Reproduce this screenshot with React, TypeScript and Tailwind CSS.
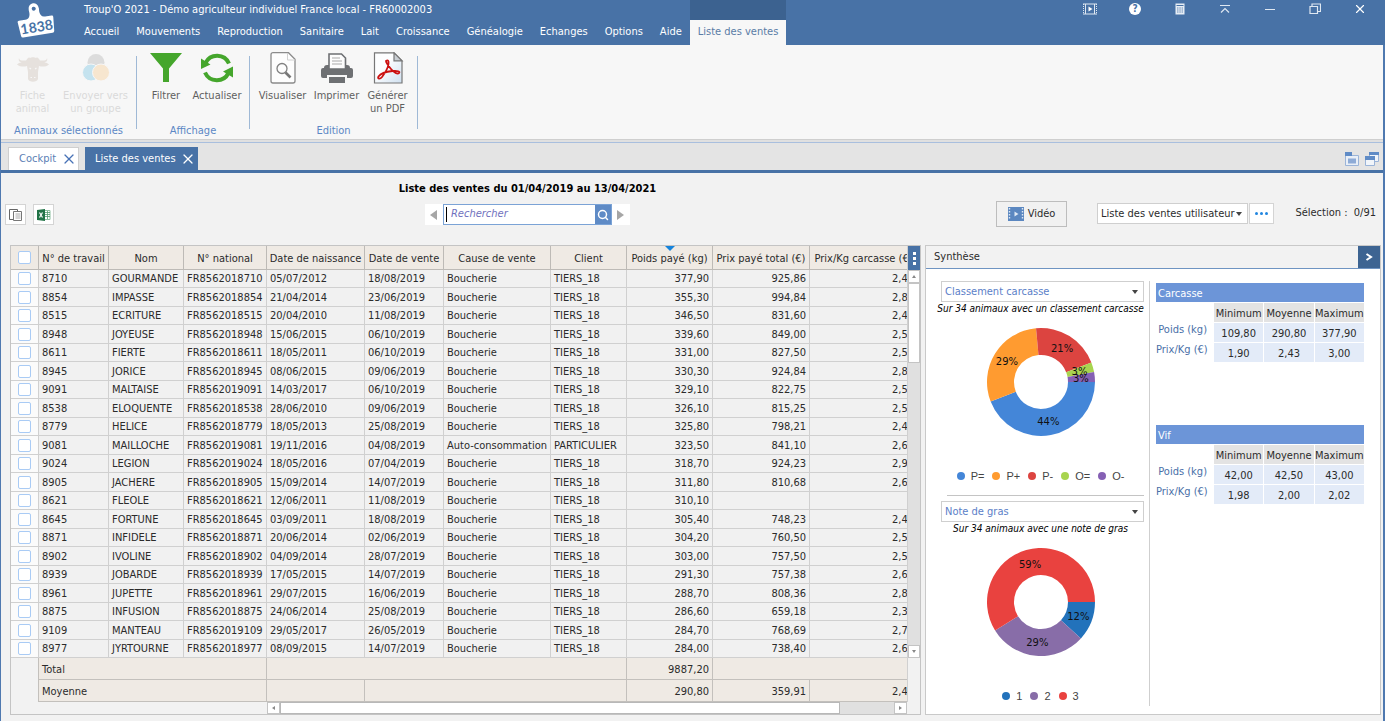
import React from "react";
import { Search, X } from "lucide-react";

const MENU = [
  "Accueil",
  "Mouvements",
  "Reproduction",
  "Sanitaire",
  "Lait",
  "Croissance",
  "Généalogie",
  "Echanges",
  "Options",
  "Aide",
];

// travail, nom, national, naissance, vente, cause, client, poids, prix total, prix/kg
const ROWS = [
  ["8710", "GOURMANDE", "FR8562018710", "05/07/2012", "18/08/2019", "Boucherie", "TIERS_18", "377,90", "925,86", "2,45"],
  ["8854", "IMPASSE", "FR8562018854", "21/04/2014", "23/06/2019", "Boucherie", "TIERS_18", "355,30", "994,84", "2,80"],
  ["8515", "ECRITURE", "FR8562018515", "20/04/2010", "11/08/2019", "Boucherie", "TIERS_18", "346,50", "831,60", "2,40"],
  ["8948", "JOYEUSE", "FR8562018948", "15/06/2015", "06/10/2019", "Boucherie", "TIERS_18", "339,60", "849,00", "2,50"],
  ["8611", "FIERTE", "FR8562018611", "18/05/2011", "06/10/2019", "Boucherie", "TIERS_18", "331,00", "827,50", "2,50"],
  ["8945", "JORICE", "FR8562018945", "08/06/2015", "09/06/2019", "Boucherie", "TIERS_18", "330,30", "924,84", "2,80"],
  ["9091", "MALTAISE", "FR8562019091", "14/03/2017", "06/10/2019", "Boucherie", "TIERS_18", "329,10", "822,75", "2,50"],
  ["8538", "ELOQUENTE", "FR8562018538", "28/06/2010", "09/06/2019", "Boucherie", "TIERS_18", "326,10", "815,25", "2,50"],
  ["8779", "HELICE", "FR8562018779", "18/05/2013", "25/08/2019", "Boucherie", "TIERS_18", "325,80", "798,21", "2,45"],
  ["9081", "MAILLOCHE", "FR8562019081", "19/11/2016", "04/08/2019", "Auto-consommation", "PARTICULIER", "323,50", "841,10", "2,60"],
  ["9024", "LEGION", "FR8562019024", "18/05/2016", "07/04/2019", "Boucherie", "TIERS_18", "318,70", "924,23", "2,90"],
  ["8905", "JACHERE", "FR8562018905", "15/09/2014", "14/07/2019", "Boucherie", "TIERS_18", "311,80", "810,68", "2,60"],
  ["8621", "FLEOLE", "FR8562018621", "12/06/2011", "11/08/2019", "Boucherie", "TIERS_18", "310,10", "", ""],
  ["8645", "FORTUNE", "FR8562018645", "03/09/2011", "18/08/2019", "Boucherie", "TIERS_18", "305,40", "748,23", "2,45"],
  ["8871", "INFIDELE", "FR8562018871", "20/06/2014", "02/06/2019", "Boucherie", "TIERS_18", "304,20", "760,50", "2,50"],
  ["8902", "IVOLINE", "FR8562018902", "04/09/2014", "28/07/2019", "Boucherie", "TIERS_18", "303,00", "757,50", "2,50"],
  ["8939", "JOBARDE", "FR8562018939", "17/05/2015", "14/07/2019", "Boucherie", "TIERS_18", "291,30", "757,38", "2,60"],
  ["8961", "JUPETTE", "FR8562018961", "29/07/2015", "16/06/2019", "Boucherie", "TIERS_18", "288,70", "808,36", "2,80"],
  ["8875", "INFUSION", "FR8562018875", "24/06/2014", "25/08/2019", "Boucherie", "TIERS_18", "286,60", "659,18", "2,30"],
  ["9109", "MANTEAU", "FR8562019109", "29/05/2017", "26/05/2019", "Boucherie", "TIERS_18", "284,70", "768,69", "2,70"],
  ["8977", "JYRTOURNE", "FR8562018977", "08/09/2015", "14/07/2019", "Boucherie", "TIERS_18", "284,00", "738,40", "2,60"],
];

const HEADERS = [
  "N° de travail",
  "Nom",
  "N° national",
  "Date de naissance",
  "Date de vente",
  "Cause de vente",
  "Client",
  "Poids payé (kg)",
  "Prix payé total (€)",
  "Prix/Kg carcasse (€)",
];

type Slice = { label: string; value: number; color: string };

const CLASSEMENT: Slice[] = [
  { label: "P=", value: 15, color: "#4486d8" },
  { label: "P+", value: 10, color: "#ff9b30" },
  { label: "P-", value: 7, color: "#dc4440" },
  { label: "O=", value: 1, color: "#a8d44f" },
  { label: "O-", value: 1, color: "#8560b4" },
];

const GRAS: Slice[] = [
  { label: "1", value: 4, color: "#2272bb" },
  { label: "2", value: 10, color: "#886da8" },
  { label: "3", value: 20, color: "#e9423f" },
];

function Logo() {
  return (
    <svg viewBox="0 0 40 36" className="h-9 w-10" aria-label="1838">
      <g transform="rotate(-9 20 20)">
        <path
          fill="#fff"
          fillRule="evenodd"
          d="M3.500 15H10c3.500 0 4.500-2 5-5 .2-2.500-.5-3 0-5a5 5 0 0 1 10 0c.5 2-.2 2.500 0 5 .5 3 1.500 5 5 5h6.500a1.500 1.500 0 0 1 1.500 1.700l-1.200 13.800a2 2 0 0 1-2 1.800H5.200a2 2 0 0 1-2-1.800L2 16.700A1.500 1.500 0 0 1 3.500 15zM20 3.500a2 2 0 1 0 0 4 2 2 0 0 0 0-4z"
        />
        <text x="20" y="29" textAnchor="middle" fontSize="14" fontWeight="700" fill="#4872a6" fontFamily="Lato">
          1838
        </text>
      </g>
    </svg>
  );
}

function CowIcon() {
  return (
    <svg viewBox="0 0 32 32" className="size-8" fill="#e6e1dd">
      <path d="M2 6c-1 3 1 4.500 4 4.500h2C5 10 2 10.500 0 12.500c3 2.500 7 2.500 10 1.500l1 6v7c1 3.500 9 3.500 10 0v-7l1-6c3 1 7 1 10-1.500-2-2-5-2.500-8-2h2c3 0 5-1.500 4-4.500 0 2-2 2.500-4 2.500h-3c-2-3-2.500-3.500-4-2.500-1-1-5-1-6 0-1.500-1-2 0-4 2.500H6C4 8.500 2 8 2 6z" />
      <path d="M13.500 25.500h1.500M17 25.500h1.500M12.500 16l1.500 1M19.500 16l-1.500 1" stroke="#f7f7f7" strokeWidth="1.200" />
    </svg>
  );
}

function GroupIcon() {
  return (
    <svg viewBox="0 0 32 32" className="size-8">
      <circle cx="16" cy="10.500" r="8.500" fill="#dcdcdc" />
      <circle cx="11" cy="20.500" r="8.500" fill="#c5e3ef" stroke="#f7f7f7" />
      <circle cx="21" cy="20.500" r="8.500" fill="#f7e6cf" stroke="#f7f7f7" />
    </svg>
  );
}

function FunnelIcon() {
  return (
    <svg viewBox="0 0 32 32" className="size-8" fill="#45a62c">
      <path d="M0 1h32L19 16.500V30h-6V16.500z" />
    </svg>
  );
}

function RefreshIcon() {
  return (
    <svg viewBox="0 0 32 32" className="size-8">
      <path d="M4.500 11A13 13 0 0 1 28 11.500M27.500 21A13 13 0 0 1 4 20.500" fill="none" stroke="#45a62c" strokeWidth="4" />
      <path d="M0 6.500v10.500l9.500-4.500zM32 25.500V14.500l-10 5z" fill="#45a62c" />
    </svg>
  );
}

function PreviewIcon() {
  return (
    <svg viewBox="0 0 32 32" className="size-8" fill="none">
      <path d="M6 .7h15.500l6.500 6.500V29a2 2 0 0 1-2 2H6a2 2 0 0 1-2-2V2.700a2 2 0 0 1 2-2z" fill="#fdfdfd" stroke="#8b8b8b" strokeWidth="1.300" />
      <path d="M20.500 1v7H28" stroke="#d0d0d0" />
      <circle cx="15" cy="16.500" r="5" stroke="#808080" strokeWidth="1.300" />
      <path d="M18.500 20.500l5 5" stroke="#777" strokeWidth="2.600" />
    </svg>
  );
}

function PrinterIcon() {
  return (
    <svg viewBox="0 0 32 32" className="size-8">
      <path d="M0 18a2 2 0 0 1 2-2h1a3 3 0 0 1 3-3h20a3 3 0 0 1 3 3h1a2 2 0 0 1 2 2v6a2 2 0 0 1-2 2h-4v-3H6v3H2a2 2 0 0 1-2-2z" fill="#6e7073" />
      <path d="M8 17V2h12.500l4 4v11z" fill="#fdfdfd" stroke="#6e7073" strokeWidth="1.600" />
      <path d="M11 6h8M11 9h10M11 12h10" stroke="#aaa" strokeWidth="1.200" />
      <path d="M8 25h16v6H8z" fill="#6e7073" />
    </svg>
  );
}

function PdfIcon() {
  return (
    <svg viewBox="0 0 32 32" className="size-8">
      <defs>
        <linearGradient id="pdf-page" x1="0" y1="0" x2="1" y2="1">
          <stop offset="0.400" stopColor="#fdfeff" />
          <stop offset="1" stopColor="#cfe0f0" />
        </linearGradient>
      </defs>
      <path d="M2.500 .8H22l8 8V31H2.500z" fill="url(#pdf-page)" stroke="#777" strokeWidth="1.200" />
      <path d="M22 .8v8h8z" fill="#c9ced3" stroke="#777" strokeWidth="1.200" />
      <path
        d="M14 9c2-1.500 3 0 2.500 3-.5 4-3.500 9-6.500 13-2 2.500-5 2-3.500-.5 2-3 8-5 14-5.500 5-.5 8 .5 6.500 2-1.500 1.500-5-.5-8-4-2.500-3-5-6-5-8z"
        fill="none"
        stroke="#cc1111"
        strokeWidth="1.800"
      />
    </svg>
  );
}

function FilmIcon({ className, frame, arrow }: { className: string; frame: string; arrow: string }) {
  return (
    <svg viewBox="0 0 16 14" className={className}>
      <rect width="16" height="14" fill={frame} />
      <path d="M1.500 1v12M14.500 1v12" stroke={arrow} strokeWidth="1.400" strokeDasharray="1.500 1.500" />
      <path d="M6.500 4.500v5l4-2.500z" fill={arrow} />
    </svg>
  );
}

function RibbonButton({
  icon,
  label,
  width,
  disabled,
}: {
  icon: React.ReactNode;
  label: string;
  width: string;
  disabled?: boolean;
}) {
  return (
    <button
      disabled={disabled}
      className={`flex h-[72px] flex-col items-center gap-[5px] whitespace-pre leading-[13px] ${width} ${disabled ? "text-[#dadada]" : "text-[#5f5f5f]"}`}
    >
      {icon}
      <span>{label}</span>
    </button>
  );
}

function RibbonGroup({ title, children, className }: { title: string; children: React.ReactNode; className: string }) {
  return (
    <div className={`flex flex-col ${className}`}>
      <div className="flex justify-center">{children}</div>
      <div className="text-center leading-[14px] text-[#5b87c5]">{title}</div>
    </div>
  );
}

function RibbonDivider() {
  return <div className="mt-1 h-[73px] w-px bg-[#9fb9d6]" />;
}

function Ribbon() {
  return (
    <div className="flex h-[94px] bg-[#f7f7f7] pt-[7px]">
      <RibbonGroup title="Animaux sélectionnés" className="w-[135px]">
        <RibbonButton icon={<CowIcon />} label={"Fiche\nanimal"} width="w-[54px]" disabled />
        <RibbonButton icon={<GroupIcon />} label={"Envoyer vers\nun groupe"} width="w-[72px]" disabled />
      </RibbonGroup>
      <RibbonDivider />
      <RibbonGroup title="Affichage" className="w-[112px]">
        <RibbonButton icon={<FunnelIcon />} label="Filtrer" width="w-[48px]" />
        <RibbonButton icon={<RefreshIcon />} label="Actualiser" width="w-[54px]" />
      </RibbonGroup>
      <RibbonDivider />
      <RibbonGroup title="Edition" className="w-[167px]">
        <RibbonButton icon={<PreviewIcon />} label="Visualiser" width="w-[54px]" />
        <RibbonButton icon={<PrinterIcon />} label="Imprimer" width="w-[54px]" />
        <RibbonButton icon={<PdfIcon />} label={"Générer\nun PDF"} width="w-[48px]" />
      </RibbonGroup>
      <RibbonDivider />
    </div>
  );
}

function TitleBar() {
  return (
    <header className="flex h-[45px] bg-[#4872a6] text-white">
      <div className="w-[84px] pt-[3px] pl-4">
        <Logo />
      </div>
      <div className="flex flex-col">
        <div className="h-5 leading-5">Troup'O 2021 - Démo agriculteur individuel France local - FR60002003</div>
        <nav className="flex h-[25px] gap-[17px] leading-6">
          {MENU.map((item) => (
            <a key={item} href="#" className="whitespace-nowrap">
              {item}
            </a>
          ))}
        </nav>
      </div>
      <div className="ml-2 flex flex-col">
        <div className="h-5 bg-[#3c6290]" />
        <a href="#" className="h-[25px] bg-[#f7f7f7] px-2 leading-6 whitespace-nowrap text-[#5a7ca6]">
          Liste des ventes
        </a>
      </div>
      <div className="ml-auto flex h-[17px] items-center gap-[31px] pr-[18px]">
        <button aria-label="Vidéo">
          <svg viewBox="0 0 14 12" className="h-3 w-3.5" fill="none" stroke="#dfe8f2">
            <path d="M0 1h14M0 11h14M2.500 1v10M11.500 1v10" />
            <path d="M.5 1v10M13.500 1v10" strokeDasharray="1 1" />
            <path d="M5.500 3.500v5l4-2.500z" fill="#fff" stroke="none" />
          </svg>
        </button>
        <button aria-label="Aide" className="mx-px size-3 rounded-full bg-white text-[10px] leading-3 font-bold text-[#4872a6]">
          ?
        </button>
        <button aria-label="Calculatrice" className="mx-px">
          <svg viewBox="0 0 12 12" className="size-3">
            <rect x="1.500" y=".5" width="9" height="11" fill="#e6edf5" />
            <path d="M2.500 2.500h7" stroke="#4872a6" />
            <path d="M3 5h6M3 7h6M3 9h6" stroke="#4872a6" strokeDasharray="1.500 .8" strokeWidth=".8" />
          </svg>
        </button>
        <button aria-label="Réduire le ruban" className="mx-px">
          <svg viewBox="0 0 12 12" className="size-3" fill="none" stroke="#dfe8f2" strokeWidth="1.200">
            <path d="M1 2.500h10M2 9.500l4-4 4 4" />
          </svg>
        </button>
        <button aria-label="Minimiser" className="mx-px">
          <svg viewBox="0 0 12 12" className="size-3" stroke="#dfe8f2">
            <path d="M1 6.500h10" />
          </svg>
        </button>
        <button aria-label="Restaurer" className="mx-px">
          <svg viewBox="0 0 12 12" className="size-3" fill="none" stroke="#dfe8f2" strokeWidth="1.200">
            <path d="M1 3.500h7.500v7H1zM3 3V1h8.500v7.500H9" />
          </svg>
        </button>
        <button aria-label="Fermer">
          <X className="size-3.5" strokeWidth={2} />
        </button>
      </div>
    </header>
  );
}

function TabBar() {
  return (
    <div className="flex h-[27px] items-end gap-1.5 bg-[#e4e4e4] pl-[7px]">
      <div className="flex h-[23px] items-center gap-[5px] border border-b-0 border-[#cfcfcf] bg-white pr-px pl-2.5 text-[#5b80b5]">
        <a href="#">Cockpit</a>
        <button aria-label="Fermer Cockpit" className="text-[#4872b6]">
          <X className="size-4" strokeWidth={1.8} />
        </button>
      </div>
      <div className="flex h-[23px] items-center gap-1 bg-[#4872a6] pt-px pr-0.5 pl-2.5 text-white">
        <a href="#">Liste des ventes</a>
        <button aria-label="Fermer Liste des ventes">
          <X className="size-4" strokeWidth={1.8} />
        </button>
      </div>
      <div className="mr-1 mb-1 ml-auto flex gap-1.5">
        <button aria-label="Onglets">
          <svg viewBox="0 0 14 14" className="size-3.5">
            <path d="M.5 3.500h13v10H.5z" fill="#e9eff7" stroke="#9bb4d8" />
            <path d="M0 0h7v4H0z" fill="#5f8bc6" />
            <path d="M3 6.500h8v5H3z" fill="#8eabd6" />
          </svg>
        </button>
        <button aria-label="Fenêtres">
          <svg viewBox="0 0 14 14" className="size-3.5">
            <path d="M4.500 .5h9v9h-9z" fill="#f1f5fa" stroke="#9bb4d8" />
            <path d="M4 0h10v3H4z" fill="#5f8bc6" />
            <path d="M.5 4.500h9v9h-9z" fill="#f1f5fa" stroke="#9bb4d8" />
            <path d="M0 4h10v4H0z" fill="#5f8bc6" />
          </svg>
        </button>
      </div>
    </div>
  );
}

function Caret({ className }: { className: string }) {
  return (
    <svg viewBox="0 0 6 4" className={`h-1 w-1.5 ${className}`} fill="#444">
      <path d="M0 0h6L3 4z" />
    </svg>
  );
}

function DropDown({ label, value, className }: { label: string; value: string; className: string }) {
  return (
    <div className={`relative flex h-[21px] ${className}`}>
      <select aria-label={label} className="w-full appearance-none border border-[#cfcfcf] bg-white pt-0.5 pl-[3px] outline-none">
        <option>{value}</option>
      </select>
      <Caret className="pointer-events-none absolute top-[9px] right-1.5" />
    </div>
  );
}

function Toolbar() {
  return (
    <div className="flex h-[72px] items-end px-[4px] pb-5">
      <div className="flex gap-[7px]">
        <button aria-label="Copier" className="flex size-[21px] items-center justify-center border border-[#d4d4d4] bg-white">
          <svg viewBox="0 0 14 12" className="h-3 w-3.5" fill="#fff" stroke="#666">
            <path d="M.5 .5h8v10h-8z" />
            <path d="M4.500 2.500h8v9h-8z" stroke="#777" />
            <path d="M6.500 5h5M6.500 7h5M6.500 9h5" stroke="#aaa" />
          </svg>
        </button>
        <button aria-label="Exporter vers Excel" className="flex size-[21px] items-center justify-center border border-[#d4d4d4] bg-white">
          <svg viewBox="0 0 14 12" className="h-3 w-3.5">
            <path d="M7.500 1.500h5.500v9H7.500z" fill="#fff" stroke="#8bbf9f" />
            <path d="M8 3.500h5M8 5.500h5M8 7.500h5M10.500 2v8" stroke="#4f9a6c" strokeWidth=".8" />
            <path d="M0 1l8-1v12l-8-1z" fill="#217346" />
            <path d="M2.500 3.500l3 5M5.500 3.500l-3 5" stroke="#fff" strokeWidth="1.200" />
          </svg>
        </button>
      </div>
      <div className="mx-auto flex flex-col items-center pl-[5px]">
        <h1 className="mb-[7px] leading-4 font-bold text-black">Liste des ventes du 01/04/2019 au 13/04/2021</h1>
        <div className="flex h-[21px] bg-white">
          <button aria-label="Précédent" className="flex w-[18px] items-center justify-center">
            <svg viewBox="0 0 7 10" className="h-2.5 w-[7px]" fill="#a6a6a6">
              <path d="M7 0v10L0 5z" />
            </svg>
          </button>
          <div className="flex w-[169px] border border-[#7ba3d6]">
            <input
              aria-label="Rechercher"
              placeholder="Rechercher"
              className="my-0.5 ml-0.5 w-0 flex-1 border-l border-black pl-1 italic outline-none placeholder:text-[#6f70bd]"
            />
            <button aria-label="Lancer la recherche" className="flex w-4 items-center justify-center bg-[#5f8bc6] text-white">
              <Search className="size-3" strokeWidth={3} />
            </button>
          </div>
          <button aria-label="Suivant" className="flex w-[18px] items-center justify-center">
            <svg viewBox="0 0 7 10" className="h-2.5 w-[7px]" fill="#a6a6a6">
              <path d="M0 0v10l7-5z" />
            </svg>
          </button>
        </div>
      </div>
      <div className="flex items-center">
        <button className="-mb-0.5 flex h-[26px] w-[71px] items-center justify-center gap-1 border border-[#bdbdbd] bg-[#f1f1f1]">
          <FilmIcon className="h-3.5 w-4" frame="#5b87c0" arrow="#dfe9f5" />
          Vidéo
        </button>
        <DropDown label="Liste" value="Liste des ventes utilisateur" className="ml-[30px] w-[151px]" />
        <button aria-label="Plus d'options" className="ml-px flex h-[21px] w-[25px] items-center justify-center gap-0.5 border border-[#d4d4d4] bg-white">
          <span className="size-[3px] rounded-full bg-[#2186e0]" />
          <span className="size-[3px] rounded-full bg-[#2186e0]" />
          <span className="size-[3px] rounded-full bg-[#2186e0]" />
        </button>
        <span className="w-[105px] pt-px pr-[3px] text-right whitespace-pre">Sélection :  0/91</span>
      </div>
    </div>
  );
}

function Tick({ label }: { label: string }) {
  return (
    <input
      type="checkbox"
      aria-label={label}
      className="mx-auto block size-[13px] appearance-none rounded-[2px] border border-[#a9cbf5] bg-white"
    />
  );
}

function SalesGrid() {
  const foot = "border-r border-b border-[#c3c0bc] bg-[#efeae4] px-[3px] pt-[3px] pb-0 leading-4";
  return (
    <section className="flex min-w-0 flex-1 flex-col border border-[#c4c4c4]">
      <div className="flex">
        <div className="w-0 flex-1 overflow-hidden">
          <table className="w-[907px] table-fixed border-separate border-spacing-0 whitespace-nowrap">
            <colgroup>
              <col className="w-[28px]" />
              <col className="w-[70px]" />
              <col className="w-[75px]" />
              <col className="w-[83px]" />
              <col className="w-[98px]" />
              <col className="w-[79px]" />
              <col className="w-[107px]" />
              <col className="w-[76px]" />
              <col className="w-[86px]" />
              <col className="w-[97px]" />
              <col className="w-[108px]" />
            </colgroup>
            <thead>
              <tr className="h-6">
                <th className="border-r border-b border-[#bdbab6] bg-[#efeae4] p-0">
                  <Tick label="Tout sélectionner" />
                </th>
                {HEADERS.map((h) => (
                  <th
                    key={h}
                    className="relative border-r border-b border-[#bdbab6] bg-[#efeae4] p-0 pt-[3px] text-center leading-4 font-normal"
                  >
                    {h === "Poids payé (kg)" && (
                      <svg viewBox="0 0 10 5" className="absolute top-0 left-[38px] h-[5px] w-2.5" fill="#1583dc">
                        <path d="M0 0h10L5 5z" />
                      </svg>
                    )}
                    {h}
                  </th>
                ))}
              </tr>
            </thead>
            <tbody>
              {ROWS.map((row) => (
                <tr key={row[0]} className="odd:h-[18px] even:h-[19px]">
                  <td className="border-r border-b border-[#d0d0d0] bg-[#fbfbfb] p-0">
                    <Tick label={`Sélectionner ${row[1]}`} />
                  </td>
                  {row.map((cell, i) => (
                    <td
                      key={i}
                      className={`border-r border-b border-[#d0d0d0] bg-[#f1f1f1] px-[3px] pt-px pb-0 leading-4 ${i > 6 ? "text-right" : ""}`}
                    >
                      {cell}
                    </td>
                  ))}
                </tr>
              ))}
            </tbody>
            <tfoot>
              <tr className="h-[22px]">
                <td className="border-r border-[#c3c0bc]" />
                <td colSpan={3} className={foot}>Total</td>
                <td colSpan={4} className={foot} />
                <td className={`${foot} text-right`}>9887,20</td>
                <td colSpan={2} className={foot} />
              </tr>
              <tr className="h-[22px]">
                <td className="border-r border-[#c3c0bc]" />
                <td colSpan={3} className={foot}>Moyenne</td>
                <td className={foot} />
                <td colSpan={3} className={foot} />
                <td className={`${foot} text-right`}>290,80</td>
                <td className={`${foot} text-right`}>359,91</td>
                <td className={`${foot} text-right`}>2,43</td>
              </tr>
            </tfoot>
          </table>
        </div>
        <div className="flex w-[13px] flex-col border-l border-[#d0d0d0]">
          <button aria-label="Colonnes" className="flex h-6 flex-col items-center justify-center gap-0.5 bg-[#4872a6]">
            <span className="size-[3px] bg-white" />
            <span className="size-[3px] bg-white" />
            <span className="size-[3px] bg-white" />
          </button>
          <div className="flex h-[388px] flex-col bg-[#e0e0e0]">
            <button aria-label="Monter" className="flex h-[13px] items-center justify-center border border-[#c4c4c4] bg-white">
              <svg viewBox="0 0 4 3" className="h-[3px] w-1" fill="#888">
                <path d="M0 3h4L2 0z" />
              </svg>
            </button>
            <div className="h-20 border border-[#c4c4c4] bg-white" />
            <button aria-label="Descendre" className="mt-auto flex h-[13px] items-center justify-center border border-[#c4c4c4] bg-white">
              <svg viewBox="0 0 4 3" className="h-[3px] w-1" fill="#888">
                <path d="M0 0h4L2 3z" />
              </svg>
            </button>
          </div>
        </div>
      </div>
      <div className="mr-[13px] ml-64 flex h-3 bg-[#e0e0e0]">
        <button aria-label="Défiler à gauche" className="flex w-[13px] items-center justify-center border border-[#c4c4c4] bg-white">
          <svg viewBox="0 0 3 4" className="h-1 w-[3px]" fill="#888">
            <path d="M3 0v4L0 2z" />
          </svg>
        </button>
        <div className="w-[560px] border border-[#b8b8b8] bg-white" />
        <button aria-label="Défiler à droite" className="ml-auto flex w-[13px] items-center justify-center border border-[#c4c4c4] bg-white">
          <svg viewBox="0 0 3 4" className="h-1 w-[3px]" fill="#888">
            <path d="M0 0v4l3-2z" />
          </svg>
        </button>
      </div>
    </section>
  );
}

function Donut({ data }: { data: Slice[] }) {
  const total = data.reduce((sum, s) => sum + s.value, 0);
  const point = (angle: number, r: number) => [55 + r * Math.cos(angle), 55 + r * Math.sin(angle)];
  let start = 0;
  const arcs = data.map((s) => {
    const end = start + (s.value / total) * 2 * Math.PI;
    const big = end - start > Math.PI ? 1 : 0;
    const d = `M${point(start, 54)}A54 54 0 ${big} 1 ${point(end, 54)}L${point(end, 27)}A27 27 0 ${big} 0 ${point(start, 27)}Z`;
    const [x, y] = point((start + end) / 2, 40);
    start = end;
    return { ...s, d, x, y, percent: Math.round((s.value / total) * 100) };
  });
  return (
    <svg viewBox="0 0 110 110" className="size-[110px]">
      {arcs.map((a) => (
        <path key={a.label} d={a.d} fill={a.color} />
      ))}
      {arcs.map((a) => (
        <text key={a.label} x={a.x} y={a.y + 4} textAnchor="middle" fontSize="10" fontFamily="DejaVu Sans" fill="#111">
          {a.percent}%
        </text>
      ))}
    </svg>
  );
}

function ChartBlock({ title, note, data }: { title: string; note: string; data: Slice[] }) {
  return (
    <div>
      <DropDown label="Graphique" value={title} className="text-[#5b80c8]" />
      <div className="flex flex-col items-center pr-1">
        <p className="text-[10px] leading-[14px] whitespace-nowrap text-black italic">{note}</p>
        <div className="mt-[11px]">
          <Donut data={data} />
        </div>
        <ul className="mt-[31px] flex h-4 items-center gap-2 font-['Liberation_Sans'] text-[#444]">
          {data.map((s) => (
            <li key={s.label} className="flex items-center gap-1.5">
              <span className="size-2 rounded-full" style={{ backgroundColor: s.color }} />
              {s.label}
            </li>
          ))}
        </ul>
      </div>
    </div>
  );
}

function StatBlock({ title, poids, prix }: { title: string; poids: string[]; prix: string[] }) {
  return (
    <table className="w-full table-fixed border-separate border-spacing-0 text-center">
      <caption className="h-[19px] bg-[#6c95d8] pl-0.5 text-left leading-[22px] text-white">{title}</caption>
      <colgroup>
        <col className="w-[57px]" />
        <col />
        <col />
        <col />
      </colgroup>
      <thead>
        <tr className="h-5">
          <td />
          {["Minimum", "Moyenne", "Maximum"].map((h) => (
            <th key={h} className="border-t border-l border-white bg-[#e3e3e3] p-0 pt-[3px] leading-[14px] font-normal">
              {h}
            </th>
          ))}
        </tr>
      </thead>
      <tbody>
        {[["Poids (kg)", ...poids], ["Prix/Kg (€)", ...prix]].map(([name, ...values]) => (
          <tr key={name} className="h-5">
            <th className="p-0 pr-1.5 text-right align-top leading-4 font-normal whitespace-nowrap text-[#4a6fa8]">{name}</th>
            {values.map((v) => (
              <td key={v} className="border-t border-l border-white bg-[#e3ebf8] p-0 pt-[3px] leading-[14px]">
                {v}
              </td>
            ))}
          </tr>
        ))}
      </tbody>
    </table>
  );
}

function Synthese() {
  return (
    <aside className="flex w-[456px] flex-col border border-[#c9c9c9] bg-white">
      <div className="flex h-[23px] justify-between border-b border-[#6f94c2] bg-[#f2f2f2] pl-2 leading-[21px]">
        Synthèse
        <button aria-label="Replier" className="flex w-[22px] items-center justify-center bg-[#3d6492]">
          <svg viewBox="0 0 8 8" className="size-2" fill="none" stroke="#fff" strokeWidth="2">
            <path d="M1.500 1L6 4 1.500 7" />
          </svg>
        </button>
      </div>
      <div className="flex flex-1 pt-3 pr-4 pb-2 pl-[15px]">
        <div className="w-[203px]">
          <ChartBlock title="Classement carcasse" note="Sur 34 animaux avec un classement carcasse" data={CLASSEMENT} />
          <hr className="mt-[11px] mb-[5px] ml-1.5 border-[#c4c4c4]" />
          <ChartBlock title="Note de gras" note="Sur 34 animaux avec une note de gras" data={GRAS} />
        </div>
        <div className="ml-[5px] w-px bg-[#cfcfcf]" />
        <div className="ml-1.5 flex flex-1 flex-col gap-[63px] pt-0.5">
          <StatBlock title="Carcasse" poids={["109,80", "290,80", "377,90"]} prix={["1,90", "2,43", "3,00"]} />
          <StatBlock title="Vif" poids={["42,00", "42,50", "43,00"]} prix={["1,98", "2,00", "2,02"]} />
        </div>
      </div>
    </aside>
  );
}

export default function App() {
  return (
    <div className="flex min-h-screen flex-col bg-[#f2f2f2] font-['DejaVu_Sans_Condensed','DejaVu_Sans',sans-serif] text-[11px] text-[#2b2b2b]">
      <TitleBar />
      <div className="flex flex-1 flex-col border-r-2 border-l border-[#4f79b0]">
        <Ribbon />
        <div className="h-1 border-t border-b border-t-[#cfcfcf] border-b-[#a9bfde] bg-[#e0e0e0]" />
        <TabBar />
        <div className="h-[3px] bg-[#4872a6]" />
        <main className="flex flex-1 flex-col">
          <Toolbar />
          <div className="flex gap-1 pr-0.5 pl-[9px]">
            <SalesGrid />
            <Synthese />
          </div>
        </main>
      </div>
    </div>
  );
}
